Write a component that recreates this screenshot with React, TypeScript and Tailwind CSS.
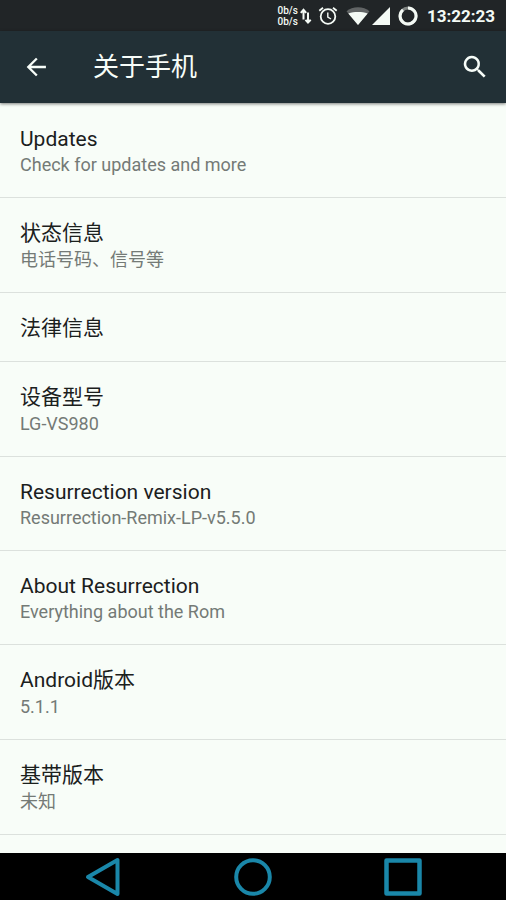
type SettingItem = {
  title: string;
  summary?: string;
}

const items: SettingItem[] = [
  { title: 'Updates', summary: 'Check for updates and more' },
  { title: '状态信息', summary: '电话号码、信号等' },
  { title: '法律信息' },
  { title: '设备型号', summary: 'LG-VS980' },
  { title: 'Resurrection version', summary: 'Resurrection-Remix-LP-v5.5.0' },
  { title: 'About Resurrection', summary: 'Everything about the Rom' },
  { title: 'Android版本', summary: '5.1.1' },
  { title: '基带版本', summary: '未知' },
];

// Chinese titles sit a little higher and take a slightly taller row
const hasChinese = (text: string) => /[\u4e00-\u9fff]/.test(text);

function StatusBar() {
  return (
    <div className="flex h-[31px] shrink-0 items-center justify-end bg-[#212527] pr-[11px] text-[#f4faf5]">
      <div className="text-[10px] leading-[11px] font-medium">
        <p>0b/s</p>
        <p>0b/s</p>
      </div>
      <svg viewBox="0 0 12 18" className="ml-[2px] h-[18px] w-3" fill="none" stroke="currentColor" strokeWidth="2">
        <path d="M3.500 12.5V3M0.800 5.800L3.500 2.800L6.200 5.800M8 5.500V15.5M5.500 12.800L8 15.600L10.700 12.800" />
      </svg>
      <svg viewBox="0 0 20 20" className="ml-[6px] h-5 w-5" fill="none" stroke="currentColor">
        <circle cx="10" cy="10.500" r="7.300" strokeWidth="1.800" />
        <path d="M1.300 4.800L5 1.700M18.700 4.800L15 1.700" strokeWidth="1.800" />
        <path d="M9.800 6.500V11L13 13" strokeWidth="1.400" />
      </svg>
      <svg viewBox="0 0 24 18" className="ml-[8px] h-[18px] w-6" fill="currentColor">
        <path d="M12 18L0.500 4.200C3.500 1.700 7.500 0.300 12 0.300S20.500 1.700 23.500 4.200Z" opacity="0.3" />
        <path d="M12 18L2.300 6.400C5.500 5.500 8.500 5 12 5S18.500 5.500 21.700 6.400Z" />
      </svg>
      <svg viewBox="0 0 18 18" className="ml-[2px] h-[18px] w-[18px]" fill="currentColor">
        <path d="M0 18L18 0V18Z" />
      </svg>
      <svg viewBox="0 0 20 20" className="ml-[8px] h-5 w-5" fill="none" stroke="currentColor" strokeWidth="3">
        <circle cx="10" cy="10" r="8" opacity="0.45" />
        <path d="M10 2A8 8 0 1 1 5 3.800" />
      </svg>
      <time className="ml-[9px] text-[17px] leading-5 font-bold">13:22:23</time>
    </div>
  );
}

function AppBar() {
  return (
    <header className="z-10 flex h-[72px] shrink-0 items-center bg-[#223036] pr-4 pl-[22px] text-[#f7fdf9] shadow-[0_1px_3px_rgba(0,0,0,0.5)]">
      <button type="button" aria-label="返回">
        <svg viewBox="0 0 24 24" className="h-7 w-7" fill="currentColor">
          <path d="M20.500 11H7.830L13.420 5.410L12 4L4 12L12 20L13.410 18.590L7.830 13H20.500Z" />
        </svg>
      </button>
      <h1 className="ml-[43px] flex-1 text-[26px] leading-9">关于手机</h1>
      <button type="button" aria-label="搜索">
        <svg viewBox="0 0 24 24" className="h-[30px] w-[30px]" fill="currentColor">
          <path d="M15.500 14H14.710L14.430 13.730A6.500 6.500 0 1 0 13.730 14.430L14 14.710V15.500L19 20.490L20.490 19ZM9.500 14A4.500 4.500 0 1 1 9.500 5A4.500 4.500 0 0 1 9.500 14Z" />
        </svg>
      </button>
    </header>
  );
}

function SettingRow({ title, summary }: SettingItem) {
  const titleClass = hasChinese(title) ? 'leading-7 pt-[21px]' : 'leading-[25px] pt-[23px]';

  return (
    <li className="border-b border-[#dce1dd]">
      <button type="button" className="block w-full px-5 pb-[19px] text-left">
        <span className={`block text-[21px] text-[#1b201d] ${titleClass}`}>{title}</span>
        {summary && <span className="block text-[18px] leading-[26px] text-[#747a76]">{summary}</span>}
      </button>
    </li>
  );
}

function NavBar() {
  return (
    <nav className="flex h-[47px] shrink-0 items-center justify-center gap-[110px] bg-black text-[#1a87a9]">
      <button type="button" aria-label="Back">
        <svg viewBox="0 0 40 40" className="h-10 w-10" fill="none" stroke="currentColor" strokeWidth="4" strokeLinejoin="round">
          <path d="M5 20L34.500 3V37Z" />
        </svg>
      </button>
      <button type="button" aria-label="Home">
        <svg viewBox="0 0 40 40" className="h-10 w-10" fill="none" stroke="currentColor" strokeWidth="4">
          <circle cx="20" cy="20" r="16.800" />
        </svg>
      </button>
      <button type="button" aria-label="Recents">
        <svg viewBox="0 0 40 40" className="h-10 w-10" fill="none" stroke="currentColor" strokeWidth="4.500" strokeLinejoin="round">
          <rect x="3.500" y="3.500" width="33" height="33" />
        </svg>
      </button>
    </nav>
  );
}

export default function App() {
  return (
    <div className="flex h-screen flex-col overflow-hidden bg-[#f8fdf8] font-[Roboto,'Noto_Sans_CJK_SC',sans-serif]">
      <StatusBar />
      <AppBar />
      <main className="min-h-0 flex-1 overflow-hidden pt-px">
        <ul>
          {items.map((item) => (
            <SettingRow key={item.title} title={item.title} summary={item.summary} />
          ))}
        </ul>
      </main>
      <NavBar />
    </div>
  );
}
